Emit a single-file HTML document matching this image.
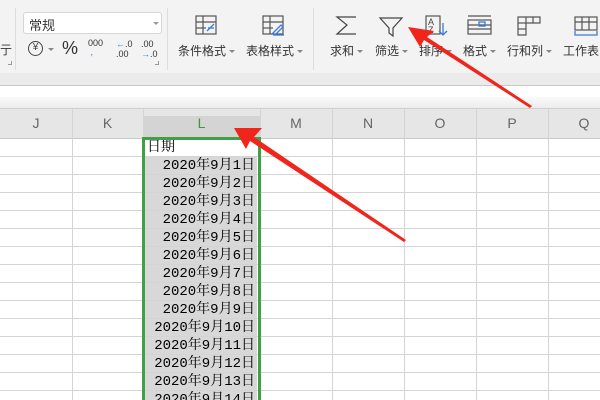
<!DOCTYPE html>
<html style="width:600px;height:400px;overflow:hidden"><head><meta charset="utf-8"><style>
*{margin:0;padding:0;box-sizing:border-box}
body{width:600px;height:400px;overflow:hidden;background:#fff;position:relative;font-family:"Liberation Sans","Noto Sans CJK SC",sans-serif}
.a{position:absolute}
.tb{left:0;top:0;width:600px;height:73px;background:#f3f3f3}
.lbl{position:absolute;font-size:12px;color:#333;white-space:nowrap}
.lbl .c{display:inline-block;width:0;height:0;border-left:3px solid transparent;border-right:3px solid transparent;border-top:3px solid #888;margin-left:3px;vertical-align:middle}
.hdr{position:absolute;top:109px;height:29px;font-size:14px;color:#666;text-align:center;line-height:29px}
.cell{position:absolute;left:145px;width:112px;height:17px;background:#d8d8d8;font-family:"Liberation Mono","Noto Serif CJK SC",monospace;font-size:14px;text-align:right;padding-right:2px;line-height:18px;color:#000;white-space:nowrap;overflow:hidden}
</style></head><body>
<div class="a tb"></div>
<div class="a" style="left:15px;top:8px;width:1px;height:62px;background:#ddd"></div>
<div class="a" style="left:167px;top:8px;width:1px;height:62px;background:#ddd"></div>
<div class="a" style="left:313px;top:8px;width:1px;height:62px;background:#ddd"></div>
<div class="lbl" style="left:0;top:41px">亍</div>
<div class="a" style="left:8px;top:61px;width:4px;height:4px;border-right:1px solid #999;border-bottom:1px solid #999"></div>
<div class="a" style="left:155px;top:61px;width:4px;height:4px;border-right:1px solid #999;border-bottom:1px solid #999"></div>
<div class="a" style="left:23px;top:12px;width:139px;height:22px;background:#fff;border:1px solid #d6d6d6;border-radius:3px"></div>
<div class="lbl" style="left:29px;top:15px;font-size:13px">常规</div>
<div class="a" style="left:153px;top:22px;border-left:3px solid transparent;border-right:3px solid transparent;border-top:3px solid #999"></div>
<div class="a" style="left:28px;top:41px;width:15px;height:15px;border:1.5px solid #444;border-radius:50%;font-size:10px;text-align:center;line-height:12px;color:#444">¥</div>
<div class="a" style="left:48px;top:48px;border-left:3px solid transparent;border-right:3px solid transparent;border-top:3px solid #888"></div>
<div class="lbl" style="left:62px;top:38px;font-size:18px;color:#333">%</div>
<div class="lbl" style="left:88px;top:39px;font-size:9px;line-height:9px">000<br><span style="color:#3a7bd5">&nbsp;,</span></div>
<div class="lbl" style="left:116px;top:39px;font-size:9px;line-height:10px"><span style="color:#3a7bd5">←</span>.0<br>.00</div>
<div class="lbl" style="left:141px;top:39px;font-size:9px;line-height:10px">.00<br><span style="color:#3a7bd5">→</span>.0</div>
<svg class="a" style="left:0;top:0" width="600" height="73">
<g fill="none" stroke="#555" stroke-width="1.2">
<rect x="196" y="16" width="20" height="18"/><line x1="196" y1="22" x2="216" y2="22"/><line x1="196" y1="28" x2="206" y2="28"/><line x1="203" y1="16" x2="203" y2="34"/>
<rect x="263" y="16" width="20" height="18"/><line x1="263" y1="22" x2="283" y2="22"/><line x1="263" y1="28" x2="273" y2="28"/><line x1="270" y1="16" x2="270" y2="34"/>
<path d="M356 17H337L347 25L337 34H356" stroke="#444"/>
<path d="M380 18H402L393 28V36L389 33V28Z" stroke="#444"/>
<rect x="426" y="16" width="14" height="18"/>
<rect x="468" y="20" width="23" height="14"/><line x1="468" y1="16" x2="491" y2="16"/><line x1="468" y1="25" x2="491" y2="25"/><line x1="468" y1="29" x2="491" y2="29"/>
<path d="M518 17H540V23H526V35H518Z"/><line x1="518" y1="23" x2="526" y2="23"/><line x1="518" y1="29" x2="526" y2="29"/><line x1="526" y1="17" x2="526" y2="23"/><line x1="533" y1="17" x2="533" y2="23"/>
<rect x="575" y="17" width="22" height="13"/><line x1="575" y1="22" x2="597" y2="22"/><line x1="582" y1="17" x2="582" y2="30"/><line x1="589" y1="17" x2="589" y2="30"/>
</g>
<g fill="none" stroke="#3a7bd5" stroke-width="1.3">
<path d="M207 31L214 24M208 28H214"/><path d="M273 33L281 25L283 27L275 35ZM273 35H284"/>
<path d="M443 23V35M439 31L443 35L447 31"/><rect x="479" y="22" width="6" height="4"/><path d="M575 31V35H597V31"/>
</g>
<text x="428" y="25" font-size="9" fill="#444" font-family="Liberation Sans">A</text><text x="428" y="33" font-size="9" fill="#444" font-family="Liberation Sans">Z</text>
</svg>
<div class="lbl" style="left:178px;top:42px">条件格式<span class="c"></span></div>
<div class="lbl" style="left:246px;top:42px">表格样式<span class="c"></span></div>
<div class="lbl" style="left:330px;top:42px">求和<span class="c"></span></div>
<div class="lbl" style="left:375px;top:42px">筛选<span class="c"></span></div>
<div class="lbl" style="left:419px;top:42px">排序<span class="c"></span></div>
<div class="lbl" style="left:463px;top:42px">格式<span class="c"></span></div>
<div class="lbl" style="left:507px;top:42px">行和列<span class="c"></span></div>
<div class="lbl" style="left:563px;top:42px">工作表</div>
<div class="a" style="left:0;top:73px;width:600px;height:12px;background:#ebebeb"></div>
<div class="a" style="left:0;top:85px;width:600px;height:1px;background:#c8c8c8"></div>
<div class="a" style="left:0;top:97px;width:600px;height:11px;background:linear-gradient(#fafafa,#ececec)"></div>
<div class="a" style="left:0;top:108px;width:600px;height:1px;background:#cfcfcf"></div>
<div class="a" style="left:0;top:109px;width:600px;height:29px;background:#e6e6e6"></div>
<div class="a" style="left:143px;top:116px;width:117px;height:22px;background:#d4d4d4"></div>
<div class="a" style="left:0;top:138px;width:600px;height:1px;background:#c8c8c8"></div>
<svg class="a" style="left:0;top:109px" width="600" height="291">
<g stroke="#d4d4d4" stroke-width="1">
<path d="M72.5 0V291M143.5 0V291M260.5 0V291M332.5 0V291M404.5 0V291M476.5 0V291M548.5 0V291"/>
<path d="M0 47.5H600M0 65.5H600M0 83.5H600M0 101.5H600M0 119.5H600M0 137.5H600M0 155.5H600M0 173.5H600M0 191.5H600M0 209.5H600M0 227.5H600M0 245.5H600M0 263.5H600M0 281.5H600"/>
</g></svg>
<div class="hdr" style="left:0;width:72px">J</div>
<div class="hdr" style="left:72px;width:71px">K</div>
<div class="hdr" style="left:143px;width:117px;color:#3a9a3a">L</div>
<div class="hdr" style="left:260px;width:72px">M</div>
<div class="hdr" style="left:332px;width:72px">N</div>
<div class="hdr" style="left:404px;width:72px">O</div>
<div class="hdr" style="left:476px;width:72px">P</div>
<div class="hdr" style="left:548px;width:72px">Q</div>
<div class="cell" style="top:139px;background:#fff;text-align:left;padding-left:2px">日期</div>
<div class="cell" style="top:157px">2020年9月1日</div>
<div class="cell" style="top:175px">2020年9月2日</div>
<div class="cell" style="top:193px">2020年9月3日</div>
<div class="cell" style="top:211px">2020年9月4日</div>
<div class="cell" style="top:229px">2020年9月5日</div>
<div class="cell" style="top:247px">2020年9月6日</div>
<div class="cell" style="top:265px">2020年9月7日</div>
<div class="cell" style="top:283px">2020年9月8日</div>
<div class="cell" style="top:301px">2020年9月9日</div>
<div class="cell" style="top:319px">2020年9月10日</div>
<div class="cell" style="top:337px">2020年9月11日</div>
<div class="cell" style="top:355px">2020年9月12日</div>
<div class="cell" style="top:373px">2020年9月13日</div>
<div class="cell" style="top:391px;height:9px;line-height:18px">2020年9月14日</div>
<div class="a" style="left:142px;top:137px;width:119px;height:263px;border:3px solid #3fa046;border-bottom:none"></div>
<svg class="a" style="left:0;top:0" width="600" height="400">
<polygon fill="#f0261c" points="408,27 434,31 427,37 532,106 530,108 424,40 420,47"/>
<polygon fill="#f0261c" points="234,128 262,128 254,137 406,240 404,242 250,141 246,149"/>
</svg>
</body></html>
